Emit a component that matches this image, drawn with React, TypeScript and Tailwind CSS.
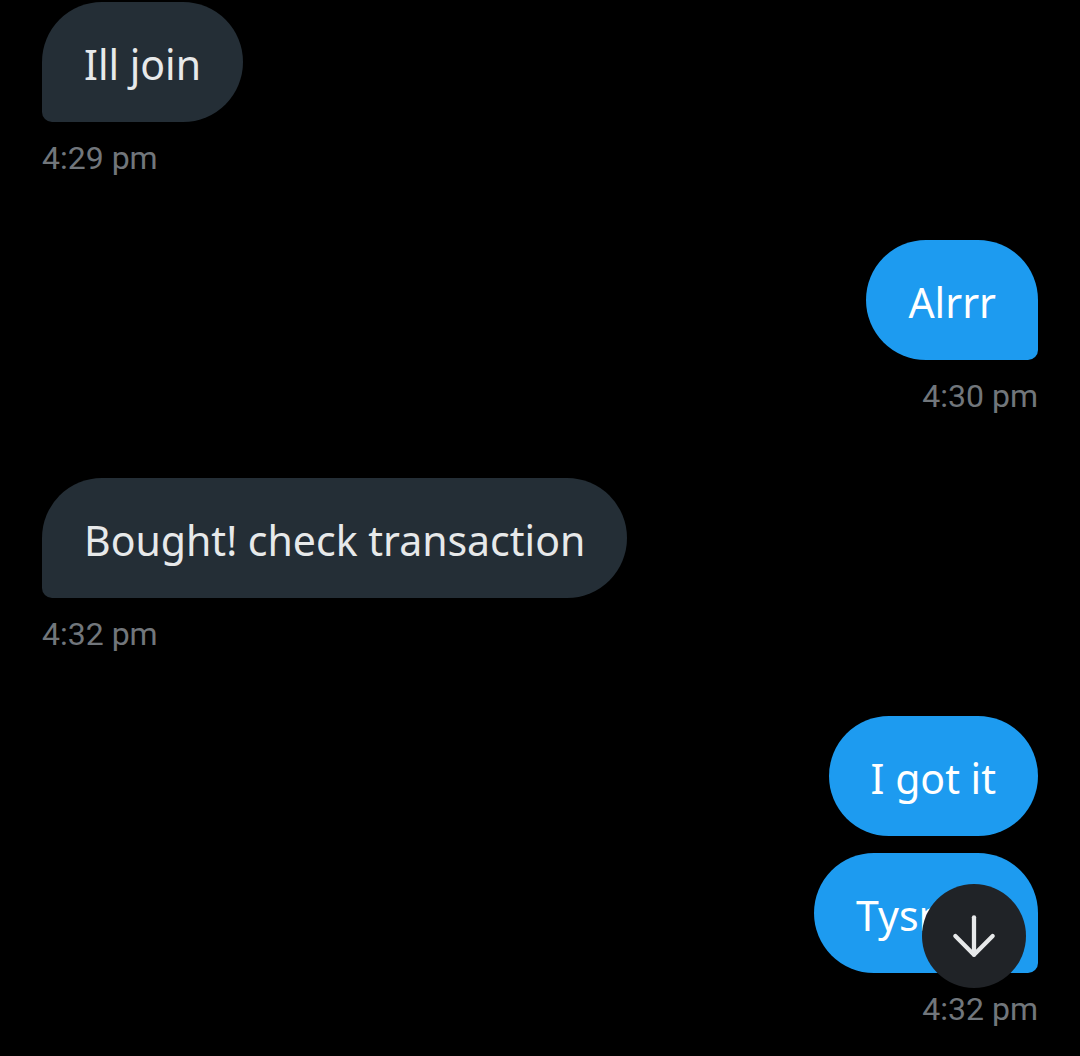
import { ArrowDown } from 'lucide-react'

type Msg = { text: string; mine: boolean; tail: boolean; wide?: boolean }

const groups: { mine: boolean; time: string; msgs: Msg[] }[] = [
  { mine: false, time: '4:29 pm', msgs: [{ text: 'Ill join', mine: false, tail: true }] },
  { mine: true, time: '4:30 pm', msgs: [{ text: 'Alrrr', mine: true, tail: true }] },
  { mine: false, time: '4:32 pm', msgs: [{ text: 'Bought! check transaction', mine: false, tail: true }] },
  {
    mine: true,
    time: '4:32 pm',
    msgs: [
      { text: 'I got it', mine: true, tail: false },
      { text: 'Tysm', mine: true, tail: true, wide: true },
    ],
  },
]

function Bubble({ m }: { m: Msg }) {
  const shape = m.tail
    ? m.mine
      ? 'rounded-[60px] rounded-br-[10px]'
      : 'rounded-[60px] rounded-bl-[10px]'
    : 'rounded-[60px]'
  const color = m.mine ? 'bg-[#1d9bf0] text-white' : 'bg-[#242e36] text-[#e7e9ea]'
  return (
    <div
      className={`h-[120px] px-[42px] pt-[4px] flex items-center text-[41px] leading-none ${shape} ${color} ${m.wide ? 'min-w-[224px]' : ''}`}
    >
      {m.text}
    </div>
  )
}

export default function App() {
  return (
    <div className="w-[1080px] h-[1056px] bg-black overflow-hidden relative" style={{ fontFamily: '"Noto Sans", sans-serif' }}>
      <div className="px-[42px] pt-[2px] flex flex-col gap-[64px]">
        {groups.map((g, i) => (
          <div key={i} className={`flex flex-col ${g.mine ? 'items-end' : 'items-start'}`}>
            <div className={`flex flex-col gap-[17px] ${g.mine ? 'items-end' : 'items-start'}`}>
              {g.msgs.map((m, j) => (
                <Bubble key={j} m={m} />
              ))}
            </div>
            <div
              className="mt-[18px] h-[36px] leading-[36px] text-[32px] text-[#71767b]"
              style={{ fontFamily: 'Roboto, sans-serif' }}
            >
              {g.time}
            </div>
          </div>
        ))}
      </div>
      <button className="absolute left-[922px] top-[884px] w-[104px] h-[104px] rounded-full bg-[#202327] flex items-center justify-center">
        <ArrowDown className="w-[64px] h-[64px] text-[#e7e9ea]" strokeWidth={1.6} />
      </button>
    </div>
  )
}
